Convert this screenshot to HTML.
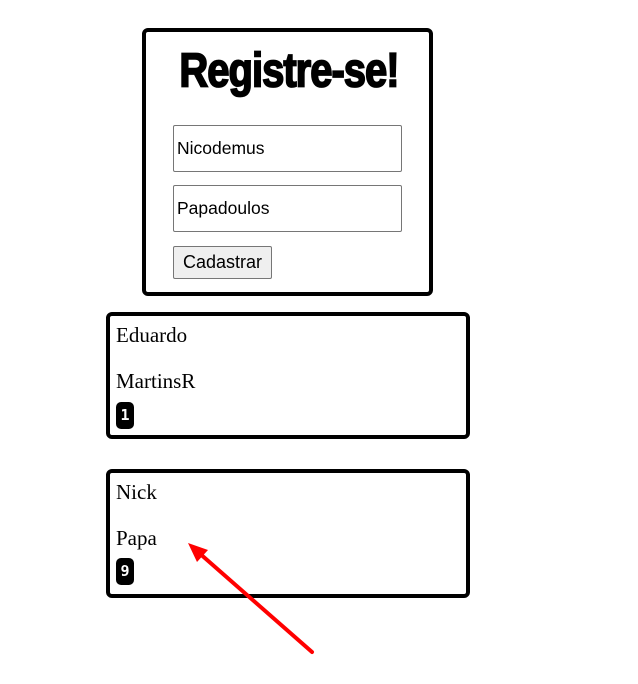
<!DOCTYPE html>
<html><head><style>
body{margin:0;width:638px;height:684px;background:#fff;position:relative;overflow:hidden;font-family:"Liberation Sans",sans-serif}
.form{position:absolute;left:142px;top:28px;width:283px;height:260px;border:4px solid #000;border-radius:6px}
.title{position:absolute;left:289px;top:47px;white-space:nowrap;font-weight:bold;font-size:40px;line-height:40px;letter-spacing:-1px;transform:translateX(-50%) scale(1.0,1.2);transform-origin:center top;-webkit-text-stroke:1.5px #000}
.inp{position:absolute;left:173px;border:1px solid #767676;border-radius:2px;font-size:17.5px;line-height:45px;padding-left:3px;box-sizing:border-box;width:229px;height:47px}
.btn{position:absolute;left:173px;top:246px;width:99px;height:33px;box-sizing:border-box;border:1px solid #767676;border-radius:2px;background:#efefef;font-size:18px;line-height:31px;text-align:center}
.card{position:absolute;left:106px;width:356px;border:4px solid #000;border-radius:6px;font-family:"Liberation Serif",serif;font-size:21px}
.card span{position:absolute;left:6px}
.badge{position:absolute;left:6px;width:18px;height:27px;background:#000;border-radius:5px;color:#fff;font-family:"DejaVu Sans Mono","Liberation Mono",monospace;font-weight:bold;font-size:15px;line-height:27px;text-align:center}
</style></head><body>
<div class="form"></div>
<div class="title">Registre-se!</div>
<div class="inp" style="top:125px">Nicodemus</div>
<div class="inp" style="top:185px">Papadoulos</div>
<div class="btn">Cadastrar</div>
<div class="card" style="top:312px;height:119px"><span style="top:7px">Eduardo</span><span style="top:53px">MartinsR</span><div class="badge" style="top:86px">1</div></div>
<div class="card" style="top:469px;height:121px"><span style="top:7px">Nick</span><span style="top:53px">Papa</span><div class="badge" style="top:85px">9</div></div>
<svg style="position:absolute;left:0;top:0" width="638" height="684"><line x1="312" y1="652" x2="198" y2="552" stroke="#f00" stroke-width="4" stroke-linecap="round"/><polygon points="188,543 208,550 197,562" fill="#f00"/></svg>
</body></html>
